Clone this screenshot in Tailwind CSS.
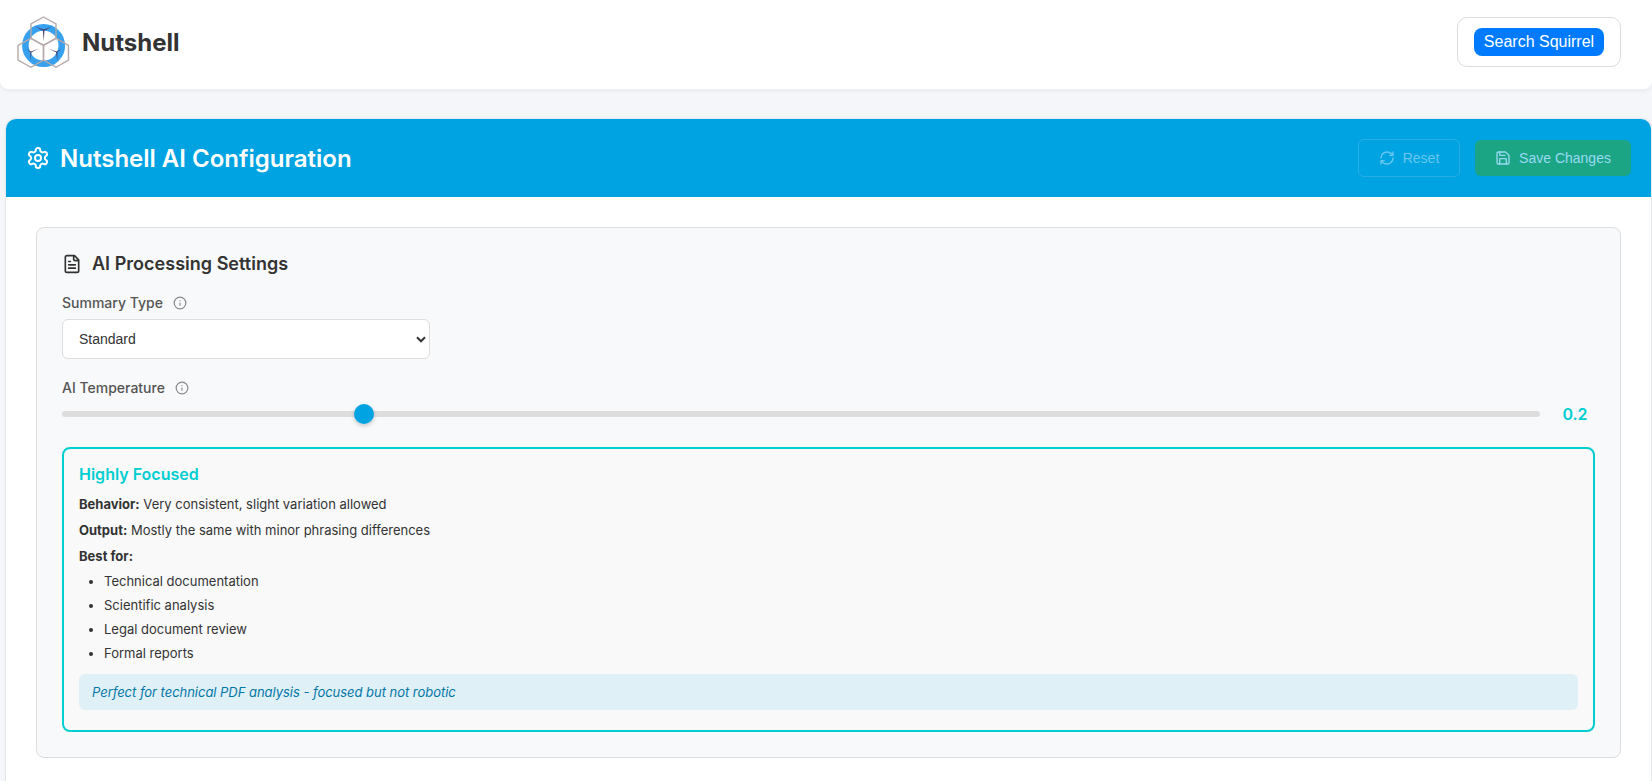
<!DOCTYPE html>
<html lang="en">
<head>
<meta charset="utf-8">
<title>Nutshell</title>
<script src="https://cdn.jsdelivr.net/npm/@tailwindcss/browser@4"></script>
</head>
<body class="h-[781px] overflow-hidden bg-[#f4f6fa] font-['Inter',sans-serif] text-[#333]">
<header class="flex h-[89px] items-start justify-between rounded-b-lg bg-white pl-4 pr-[31px] shadow-[0_2px_4px_rgba(0,0,0,0.05)]">
  <div class="flex items-center pt-4">
    <svg class="h-[54px] w-[54px]" viewBox="16 16 54 54" fill="none">
      <circle cx="43.6" cy="45.6" r="18.2" stroke="#37a0ef" stroke-width="6.6"/>
      <g stroke="#b5aaa9" stroke-width="1.4">
        <path d="M43.5 17 56 24V38.3L43.5 45.3 31 38.3V24Z"/>
        <path d="M31 38.3 43.5 45.3V60L31 67.3 18 60V45.3Z"/>
        <path d="M56 38.3 68.5 45.3V60L56 67.3 43.5 60V45.3Z"/>
      </g>
      <g fill="#453f70">
        <path d="M35 26.6 43.7 29.6 52 26.6 44.4 30.8 43.8 41.5 42.9 30.8Z"/>
        <path d="M26.8 49.2 31.2 51.4 39 48.4 31.6 52.3 30.2 61 30.4 52.2Z"/>
        <path d="M48.3 48.4 56.4 51.4 61.2 49.2 57.4 52.2 57.4 61 56 52.3Z"/>
      </g>
    </svg>
    <h1 class="ml-3 text-2xl/[28px] font-bold">Nutshell</h1>
  </div>
  <div class="mt-[17px] flex h-[50px] w-[164px] items-center justify-center rounded-[10px] border border-[#ddd] bg-white font-['Liberation_Sans',sans-serif]">
    <button class="h-7 w-[130px] rounded-lg bg-[#007bff] pb-px text-base/[27px] text-white">Search Squirrel</button>
  </div>
</header>

<main class="ml-1.5 mr-px mt-[30px] h-[700px] rounded-t-[10px] bg-white shadow-[0_0_3px_rgba(0,0,0,0.15)]">
  <div class="flex h-[78px] items-center justify-between rounded-t-[10px] bg-[#00a3e2] px-5 text-white">
    <div class="flex items-center gap-[10px]">
      <svg class="size-6" viewBox="0 0 24 24" fill="none" stroke="currentColor" stroke-width="2" stroke-linecap="round" stroke-linejoin="round"><path d="M12.22 2h-.44a2 2 0 0 0-2 2v.18a2 2 0 0 1-1 1.73l-.43.25a2 2 0 0 1-2 0l-.15-.08a2 2 0 0 0-2.73.73l-.22.38a2 2 0 0 0 .73 2.73l.15.1a2 2 0 0 1 1 1.72v.51a2 2 0 0 1-1 1.74l-.15.09a2 2 0 0 0-.73 2.73l.22.38a2 2 0 0 0 2.73.73l.15-.08a2 2 0 0 1 2 0l.43.25a2 2 0 0 1 1 1.73V20a2 2 0 0 0 2 2h.44a2 2 0 0 0 2-2v-.18a2 2 0 0 1 1-1.73l.43-.25a2 2 0 0 1 2 0l.15.08a2 2 0 0 0 2.73-.73l.22-.39a2 2 0 0 0-.73-2.73l-.15-.08a2 2 0 0 1-1-1.74v-.5a2 2 0 0 1 1-1.74l.15-.09a2 2 0 0 0 .73-2.73l-.22-.38a2 2 0 0 0-2.73-.73l-.15.08a2 2 0 0 1-2 0l-.43-.25a2 2 0 0 1-1-1.73V4a2 2 0 0 0-2-2z"/><circle cx="12" cy="12" r="3"/></svg>
      <h2 class="pt-0.5 text-2xl/[30px] font-semibold">Nutshell AI Configuration</h2>
    </div>
    <div class="flex items-center gap-[15px] font-['Liberation_Sans',sans-serif] text-sm">
      <button class="flex h-[38px] w-[102px] items-center justify-center gap-2 rounded-md border border-[#26b0e6] text-[#66c8ee]">
        <svg class="size-4" viewBox="0 0 24 24" fill="none" stroke="currentColor" stroke-width="2" stroke-linecap="round" stroke-linejoin="round"><path d="M3 12a9 9 0 0 1 9-9 9.75 9.75 0 0 1 6.74 2.74L21 8M21 3v5h-5M21 12a9 9 0 0 1-9 9 9.75 9.75 0 0 1-6.74-2.74L3 16M8 16H3v5"/></svg>
        Reset
      </button>
      <button class="flex h-9 w-[156px] items-center justify-center gap-2 rounded-md bg-[#1ba584] text-[#99daf3]">
        <svg class="size-4" viewBox="0 0 24 24" fill="none" stroke="currentColor" stroke-width="2" stroke-linecap="round" stroke-linejoin="round"><path d="M15.2 3a2 2 0 0 1 1.4.6l3.8 3.8a2 2 0 0 1 .6 1.4V19a2 2 0 0 1-2 2H5a2 2 0 0 1-2-2V5a2 2 0 0 1 2-2z"/><path d="M17 21v-7a1 1 0 0 0-1-1H8a1 1 0 0 0-1 1v7M7 3v4a1 1 0 0 0 1 1h7"/></svg>
        Save Changes
      </button>
    </div>
  </div>

  <section class="mx-[30px] mt-[30px] h-[531px] rounded-lg border border-[#ddd] bg-[#f8f9fb] px-[25px]">
    <div class="flex items-center gap-[10px] pt-[25px]">
      <svg class="size-5" viewBox="0 0 24 24" fill="none" stroke="currentColor" stroke-width="2" stroke-linecap="round" stroke-linejoin="round"><path d="M15 2H6a2 2 0 0 0-2 2v16a2 2 0 0 0 2 2h12a2 2 0 0 0 2-2V7ZM14 2v4a2 2 0 0 0 2 2h4M10 9H8M16 13H8M16 17H8"/></svg>
      <h3 class="text-lg/[22px] font-semibold tracking-[0.02px]">AI Processing Settings</h3>
    </div>
    <div class="mt-[19px] flex h-[18px] items-center gap-2.5 text-sm font-medium text-[#555]">
      Summary Type
      <svg class="size-3.5 text-[#888]" viewBox="0 0 24 24" fill="none" stroke="currentColor" stroke-width="2" stroke-linecap="round"><circle cx="12" cy="12" r="10"/><path d="M12 16v-4M12 8h.01"/></svg>
    </div>
    <div class="mt-[7px] flex h-10 w-[368px] items-center justify-between rounded-md border border-[#ddd] bg-white pl-4 pr-[3px] font-['Liberation_Sans',sans-serif] text-sm">
      Standard
      <svg class="h-[7px] w-[10px]" viewBox="0 0 10 7" fill="none" stroke="#333" stroke-width="2"><path d="m1 1.3 4 4 4-4"/></svg>
    </div>
    <div class="mt-5 flex h-[18px] items-center gap-2.5 text-sm font-medium text-[#555]">
      AI Temperature
      <svg class="size-3.5 text-[#888]" viewBox="0 0 24 24" fill="none" stroke="currentColor" stroke-width="2" stroke-linecap="round"><circle cx="12" cy="12" r="10"/><path d="M12 16v-4M12 8h.01"/></svg>
    </div>
    <div class="mt-[7px] flex h-5 items-center">
      <div class="relative h-1.5 w-[1478px] shrink-0 rounded-full bg-[#ddd]">
        <div class="absolute -top-[7px] left-[292px] size-5 rounded-full bg-[#00a3e2] shadow-[0_2px_4px_rgba(0,0,0,0.2)]"></div>
      </div>
      <span class="ml-[15px] w-10 shrink-0 text-center text-base font-semibold text-[#00ced1]">0.2</span>
    </div>
    <div class="mt-[23px] h-[285px] rounded-lg border-2 border-[#00ced1] bg-[#f9f9f9] px-[15px] pt-[15px] text-[13px]">
      <h4 class="text-base/5 font-semibold text-[#00ced1]">Highly Focused</h4>
      <div class="mt-[7px] leading-[26px]">
        <p><strong class="font-bold">Behavior:</strong> Very consistent, slight variation allowed</p>
        <p><strong class="font-bold">Output:</strong> Mostly the same with minor phrasing differences</p>
        <p><strong class="font-bold">Best for:</strong></p>
      </div>
      <ul class="list-disc pl-[25px] leading-6">
        <li>Technical documentation</li>
        <li>Scientific analysis</li>
        <li>Legal document review</li>
        <li>Formal reports</li>
      </ul>
      <div class="mt-[9px] flex h-9 items-center rounded-md bg-[#e0f0f7] pl-[13px] pt-0.5 tracking-[-0.03px] italic text-[#0277a8]">Perfect for technical PDF analysis - focused but not robotic</div>
    </div>
  </section>
</main>
</body>
</html>
